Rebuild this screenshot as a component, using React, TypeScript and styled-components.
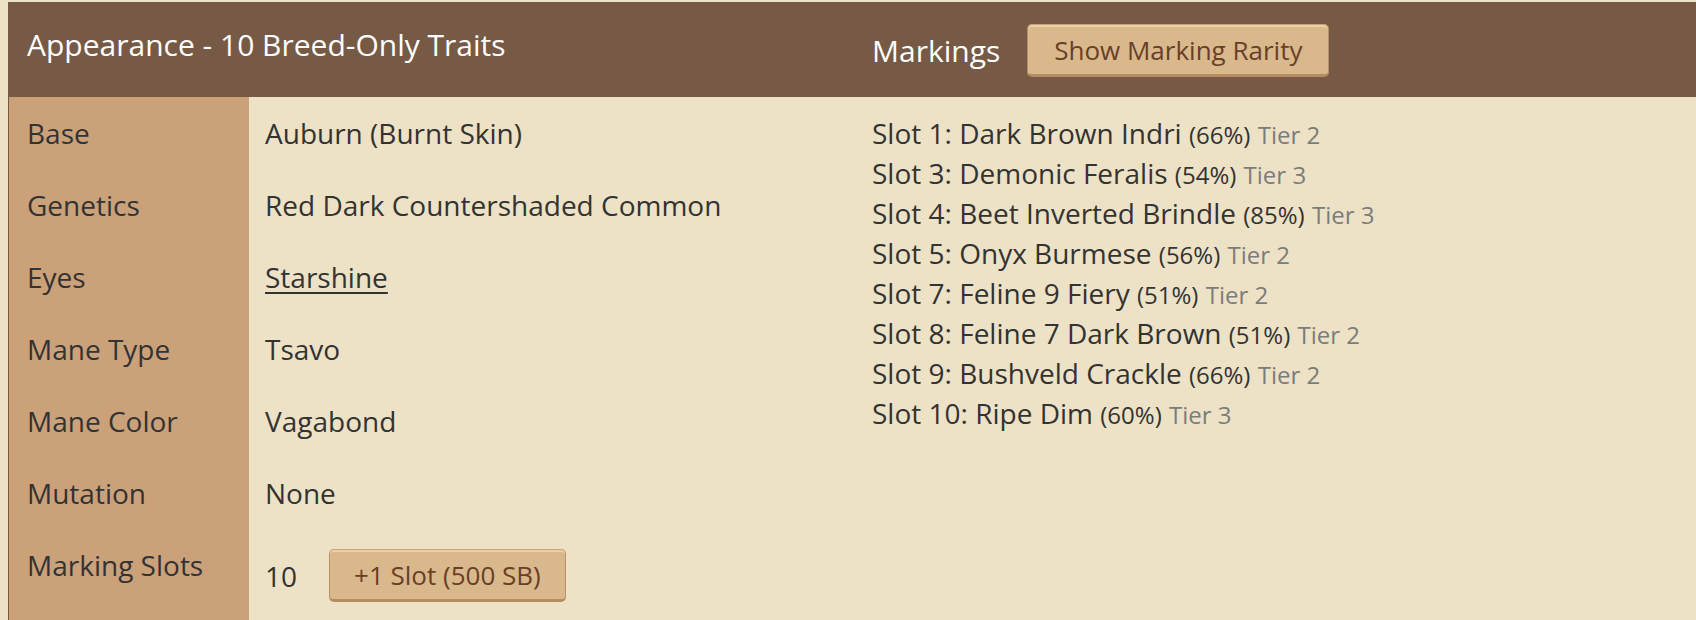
import React from "react";
import styled, { createGlobalStyle } from "styled-components";

const GlobalStyle = createGlobalStyle`
  html, body {
    margin: 0;
    padding: 0;
    background: #ede2c5;
    font-family: "Open Sans", "Noto Sans", Arial, sans-serif;
    color: #333333;
    overflow: hidden;
  }
  body {
    padding: 2px 0 0 8px;
  }
`;

const Panel = styled.section`
  border-left: 1px solid #765a46;
  background: #ede2c5;
`;

const Header = styled.header`
  display: flex;
  align-items: flex-start;
  height: 95px;
  background: #765a46;
  margin-left: -1px;
  padding-left: 1px;
`;

const HeaderLeft = styled.div`
  width: 863px;
  box-sizing: border-box;
  padding: 22px 0 0 18px;
`;

const Title = styled.h2`
  margin: 0;
  font-size: 30px;
  line-height: 42px;
  font-weight: 400;
  color: #ffffff;
`;

const HeaderRight = styled.div`
  display: flex;
  align-items: center;
  gap: 27px;
  padding-top: 22px;
`;

const HeaderLabel = styled.span`
  font-size: 30px;
  line-height: 42px;
  color: #ffffff;
`;

const TanButton = styled.button<{ $padX: number }>`
  font-family: "Open Sans", "Noto Sans", Arial, sans-serif;
  font-size: 26px;
  line-height: 36px;
  color: #6a3f28;
  background: #d9b88b;
  border: 1px solid #b99068;
  border-top-color: #c8a27a;
  border-bottom: 3px solid #b48c5f;
  box-shadow: inset 0 2px 0 #ebcfa5;
  border-radius: 5px;
  height: 53px;
  padding: 0 ${(p) => p.$padX}px;
  cursor: pointer;
  white-space: nowrap;
`;

const Body = styled.div`
  display: flex;
  align-items: flex-start;
`;

const TraitGrid = styled.div`
  width: 863px;
  display: grid;
  grid-template-columns: 240px 1fr;
`;

const LabelCell = styled.div`
  background: #cba17a;
  padding: 16px 0 16px 18px;
  font-size: 28px;
  line-height: 40px;
`;

const ValueCell = styled.div`
  display: flex;
  align-items: center;
  gap: 32px;
  padding: 16px 0 16px 16px;
  font-size: 28px;
  line-height: 40px;
  align-self: start;
`;

const ValueLink = styled.a`
  color: #333333;
  text-decoration: underline;
  text-underline-offset: 4px;
  text-decoration-thickness: 2px;
`;

const SlotButtonWrap = styled.div`
  margin: 4px 0;
`;

const MarkingList = styled.ul`
  list-style: none;
  margin: 0;
  padding: 16px 0 0 0;
`;

const MarkingItem = styled.li`
  font-size: 28px;
  line-height: 40px;
  height: 40px;
  white-space: nowrap;
`;

const Percent = styled.span`
  font-size: 24px;
  line-height: 1;
`;

const Tier = styled.span`
  font-size: 24px;
  line-height: 1;
  color: #7c7c7c;
`;

type Trait = { label: string; value: React.ReactNode };

const traits: Trait[] = [
  { label: "Base", value: "Auburn (Burnt Skin)" },
  { label: "Genetics", value: "Red Dark Countershaded Common" },
  { label: "Eyes", value: <ValueLink href="#">Starshine</ValueLink> },
  { label: "Mane Type", value: "Tsavo" },
  { label: "Mane Color", value: "Vagabond" },
  { label: "Mutation", value: "None" },
];

const markings = [
  { slot: 1, name: "Dark Brown Indri", pct: 66, tier: 2 },
  { slot: 3, name: "Demonic Feralis", pct: 54, tier: 3 },
  { slot: 4, name: "Beet Inverted Brindle", pct: 85, tier: 3 },
  { slot: 5, name: "Onyx Burmese", pct: 56, tier: 2 },
  { slot: 7, name: "Feline 9 Fiery", pct: 51, tier: 2 },
  { slot: 8, name: "Feline 7 Dark Brown", pct: 51, tier: 2 },
  { slot: 9, name: "Bushveld Crackle", pct: 66, tier: 2 },
  { slot: 10, name: "Ripe Dim", pct: 60, tier: 3 },
];

export default function App() {
  return (
    <>
      <GlobalStyle />
      <Panel>
        <Header>
          <HeaderLeft>
            <Title>Appearance - 10 Breed-Only Traits</Title>
          </HeaderLeft>
          <HeaderRight>
            <HeaderLabel>Markings</HeaderLabel>
            <TanButton $padX={26}>Show Marking Rarity</TanButton>
          </HeaderRight>
        </Header>
        <Body>
          <TraitGrid>
            {traits.map((t) => (
              <React.Fragment key={t.label}>
                <LabelCell>{t.label}</LabelCell>
                <ValueCell>{t.value}</ValueCell>
              </React.Fragment>
            ))}
            <LabelCell>Marking Slots</LabelCell>
            <ValueCell>
              <span>10</span>
              <SlotButtonWrap>
                <TanButton $padX={24}>+1 Slot (500 SB)</TanButton>
              </SlotButtonWrap>
            </ValueCell>
          </TraitGrid>
          <MarkingList>
            {markings.map((m) => (
              <MarkingItem key={m.slot}>
                Slot {m.slot}: {m.name} <Percent>({m.pct}%)</Percent>{" "}
                <Tier>Tier {m.tier}</Tier>
              </MarkingItem>
            ))}
          </MarkingList>
        </Body>
      </Panel>
    </>
  );
}
